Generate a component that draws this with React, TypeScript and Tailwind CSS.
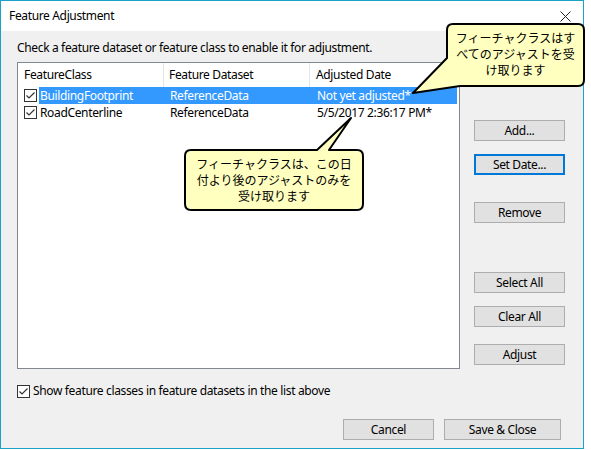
import type { ReactNode } from 'react';

function Check({ checked = true }: { checked?: boolean }) {
  return (
    <span className="flex h-[13px] w-[13px] shrink-0 items-center justify-center border border-[#333] bg-white">
      {checked && (
        <svg width="11" height="11" viewBox="0 0 11 11">
          <path d="M1.5 5.5 L4 8 L9.5 2.5" fill="none" stroke="#333" strokeWidth="1.2" />
        </svg>
      )}
    </span>
  );
}

function Btn({ children, className = '', focused = false }: { children: ReactNode; className?: string; focused?: boolean }) {
  return (
    <button
      className={`flex h-[21px] items-center justify-center bg-[#e1e1e1] text-[12px] text-black ${
        focused ? 'border-2 border-[#0078d7]' : 'border border-[#adadad]'
      } ${className}`}
    >
      {children}
    </button>
  );
}

const rows = [
  { name: 'BuildingFootprint', dataset: 'ReferenceData', date: 'Not yet adjusted*', selected: true },
  { name: 'RoadCenterline', dataset: 'ReferenceData', date: '5/5/2017 2:36:17 PM*', selected: false },
];

export default function App() {
  return (
    <div className="relative h-[450px] w-[591px] bg-white font-['Noto_Sans',sans-serif] text-[12px] tracking-[-0.35px] text-black">
      <div className="flex h-[449px] w-[584px] flex-col border border-[#19a3c9] bg-[#f0f0f0]">
        {/* title bar */}
        <div className="flex h-[30px] shrink-0 items-center justify-between bg-white pl-[8px] pr-[12px]">
          <span className="text-[12px]">Feature Adjustment</span>
          <svg width="11" height="11" viewBox="0 0 11 11">
            <path d="M0.5 0.5 L10.5 10.5 M10.5 0.5 L0.5 10.5" stroke="#222" strokeWidth="1" />
          </svg>
        </div>

        <div className="flex flex-1 flex-col pl-[16px]">
          <div className="mt-[9px] h-[16px] leading-[16px]">
            Check a feature dataset or feature class to enable it for adjustment.
          </div>

          <div className="mt-[6px] flex">
            {/* list box */}
            <div className="h-[307px] w-[443px] border border-[#828790] bg-white">
              <div className="flex h-[24px] items-center">
                <div className="flex h-full w-[146px] items-center border-r border-[#e5e5e5] pl-[6px]">FeatureClass</div>
                <div className="flex h-full w-[146px] items-center border-r border-[#e5e5e5] pl-[5px]">Feature Dataset</div>
                <div className="flex h-full flex-1 items-center pl-[6px]">Adjusted Date</div>
              </div>
              {rows.map((r) => (
                <div key={r.name} className="flex h-[17px] items-center">
                  <div className="flex w-[21px] shrink-0 pl-[6px]">
                    <Check />
                  </div>
                  <div
                    className={`mr-[2px] flex h-full flex-1 items-center ${
                      r.selected ? 'bg-[#3399ff] text-white' : 'text-black'
                    }`}
                  >
                    <div className="w-[125px] pl-[1px]">{r.name}</div>
                    <div className="w-[146px] pl-[6px]">{r.dataset}</div>
                    <div className="flex-1 pl-[7px]">{r.date}</div>
                  </div>
                </div>
              ))}
            </div>

            {/* side buttons */}
            <div className="ml-[14px] flex w-[91px] flex-col">
              <Btn className="mt-[58px]">Add...</Btn>
              <Btn className="mt-[13px]" focused>
                Set Date...
              </Btn>
              <Btn className="mt-[27px]">Remove</Btn>
              <Btn className="mt-[49px]">Select All</Btn>
              <Btn className="mt-[13px]">Clear All</Btn>
              <Btn className="mt-[17px]">Adjust</Btn>
            </div>
          </div>

          <div className="mt-[13px] flex items-center gap-[3px]">
            <Check />
            <span>Show feature classes in feature datasets in the list above</span>
          </div>

          <div className="mt-[19px] flex justify-end gap-[10px] pr-[22px]">
            <Btn className="w-[91px]">Cancel</Btn>
            <Btn className="w-[117px]">Save &amp; Close</Btn>
          </div>
        </div>
      </div>

      {/* callouts */}
      <svg className="pointer-events-none absolute left-0 top-0" width="591" height="450">
        <path
          d="M453 24 H578 Q584 24 584 30 V80 Q584 86 578 86 H460 L413 93 L447 58 V30 Q447 24 453 24 Z"
          fill="#ffffc0"
          stroke="#000"
          strokeWidth="2"
          strokeLinejoin="round"
        />
        <path
          d="M191 150 H317 L351 118 L329 150 H357 Q363 150 363 156 V204 Q363 210 357 210 H191 Q185 210 185 204 V156 Q185 150 191 150 Z"
          fill="#ffffc0"
          stroke="#000"
          strokeWidth="2"
          strokeLinejoin="round"
        />
      </svg>
      <div className="pointer-events-none absolute left-[448px] top-[30px] flex w-[135px] flex-col items-center font-['Noto_Sans_CJK_JP',sans-serif] text-[12px] leading-[16px] tracking-normal">
        <span>フィーチャクラスはす</span>
        <span>べてのアジャストを受</span>
        <span>け取ります</span>
      </div>
      <div className="pointer-events-none absolute left-[186px] top-[156px] flex w-[176px] flex-col items-center font-['Noto_Sans_CJK_JP',sans-serif] text-[12px] leading-[16px] tracking-normal">
        <span>フィーチャクラスは、この日</span>
        <span>付より後のアジャストのみを</span>
        <span>受け取ります</span>
      </div>
    </div>
  );
}
